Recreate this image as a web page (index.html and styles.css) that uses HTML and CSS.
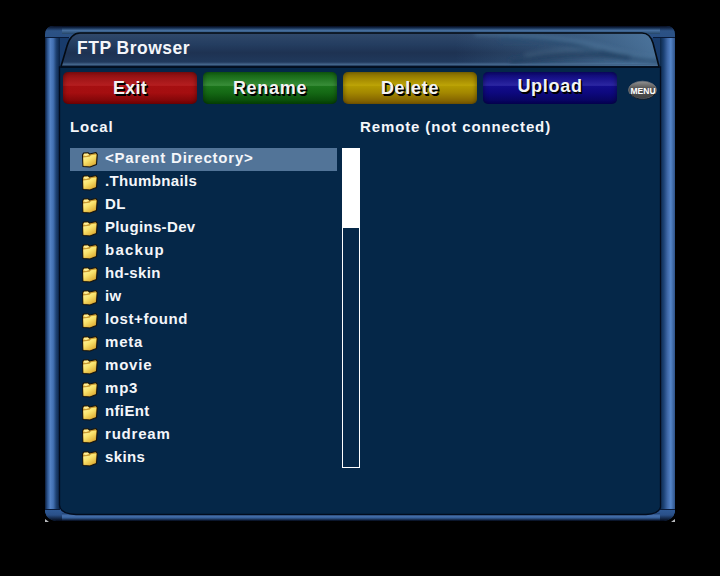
FILE: index.html
```
<!DOCTYPE html>
<html lang="en">
<head>
<meta charset="utf-8">
<title>FTP Browser</title>
<link rel="stylesheet" href="styles.css">
</head>
<body>
<svg class="frame" viewBox="0 0 720 576" aria-hidden="true">
  <defs>
    <linearGradient id="left"><stop offset="0" stop-color="#0c1d38"/><stop offset=".15" stop-color="#284f88"/><stop offset=".35" stop-color="#5482c4"/><stop offset=".55" stop-color="#4270b2"/><stop offset=".75" stop-color="#1d4070"/><stop offset="1" stop-color="#082042"/></linearGradient>
    <linearGradient id="right"><stop offset="0" stop-color="#0c2747"/><stop offset=".25" stop-color="#1c4275"/><stop offset=".5" stop-color="#4069a8"/><stop offset=".72" stop-color="#5585c8"/><stop offset="1" stop-color="#2d5288"/></linearGradient>
    <linearGradient id="top" x2="0" y2="1"><stop offset="0" stop-color="#030719"/><stop offset=".25" stop-color="#142d4f"/><stop offset=".55" stop-color="#476f9e"/><stop offset="1" stop-color="#244568"/></linearGradient>
    <linearGradient id="corner" x2="0" y2="1"><stop offset="0" stop-color="#050c20"/><stop offset=".4" stop-color="#2c5285"/><stop offset="1" stop-color="#2a5084"/></linearGradient>
    <linearGradient id="bottom" x2="0" y2="1"><stop offset="0" stop-color="#1c3f70"/><stop offset=".35" stop-color="#4871ad"/><stop offset=".6" stop-color="#36609a"/><stop offset="1" stop-color="#020817"/></linearGradient>
    <linearGradient id="foot" x2="0" y2="1"><stop offset="0" stop-color="#2f5a97"/><stop offset=".5" stop-color="#2a5088"/><stop offset="1" stop-color="#030a1a"/></linearGradient>
    <linearGradient id="title" x2="0" y2="1"><stop offset="0" stop-color="#31496b"/><stop offset=".35" stop-color="#243d60"/><stop offset=".6" stop-color="#1e3252"/><stop offset=".88" stop-color="#20395c"/><stop offset=".95" stop-color="#46658b"/><stop offset="1" stop-color="#1b3150"/></linearGradient>
    <linearGradient id="sheen"><stop offset="0" stop-color="#5482aa" stop-opacity="0"/><stop offset=".45" stop-color="#4d799f" stop-opacity=".3"/><stop offset="1" stop-color="#527da6" stop-opacity=".85"/></linearGradient>
    <filter id="soft" x="-10%" y="-50%" width="120%" height="200%"><feGaussianBlur stdDeviation="2.2"/></filter>
    <clipPath id="cap"><path d="M61 66 L67 46 Q71 33 80 33 H642 Q650 33 653 43 L659 66Z"/></clipPath>
  </defs>
  <path d="M45 35 Q45 26 54 26 H666 Q675 26 675 35 V512 Q673 520 664 521 H56 Q47 520 45 512Z" fill="#183b6b"/>
  <path d="M45 38 H60 V510 H45Z" fill="url(#left)"/>
  <path d="M660 38 H675 V510 H660Z" fill="url(#right)"/>
  <path d="M45 38 V35 Q45 26 54 26 H666 Q675 26 675 35 V38Z" fill="url(#corner)"/>
  <path d="M62 26 H660 V34 H62Z" fill="url(#top)"/>
  <path d="M45 509 H675 V512 Q673 520 664 521 H56 Q47 520 45 512Z" fill="url(#foot)"/>
  <path d="M62 513 H660 V521 H62Z" fill="url(#bottom)"/>
  <path d="M45 37.500 H69 M653 37.500 H675 M45 509.500 H60 M660 509.500 H675" stroke="#091a38"/>
  <path d="M59.500 67 H660.500 V507 Q659 514 646 514.500 H76 Q60 514 59.500 505Z" fill="#052748" stroke="#020c1d" stroke-width="1.300"/>
  <path d="M61 66 L67 46 Q71 33 80 33 H642 Q650 33 653 43 L659 66Z" fill="url(#title)"/>
  <g clip-path="url(#cap)">
    <path d="M455 33 H660 V66 H455Z" fill="url(#sheen)"/>
    <g filter="url(#soft)" fill="none">
      <path d="M500 39 Q550 38 580 47 T665 62" stroke="#294c70" stroke-width="5"/>
      <path d="M475 34 Q560 34 610 49 T665 55" stroke="#527b9f" stroke-width="3" opacity=".65"/>
      <path d="M510 62 Q580 50 630 58" stroke="#213e61" stroke-width="6" opacity=".7"/>
      <path d="M525 55 Q565 47 600 50" stroke="#587998" stroke-width="2" opacity=".5"/>
    </g>
    <path d="M61 64.500 H659" stroke="#426489"/>
  </g>
  <path d="M61 66.500 L67 46 Q71 33 80 33 H642 Q650 33 653 43 L659 66.500" fill="none" stroke="#040a12" stroke-width="1.600"/>
  <path d="M61 67 H659" stroke="#020a17" stroke-width="1.200"/>
  <path d="M45 519 L49 522 H45Z M675 519 L671 522 H675Z" fill="#b9babd"/>
</svg>
<svg class="defs" aria-hidden="true">
  <defs>
    <linearGradient id="paper" x2=".7" y2="1"><stop offset="0" stop-color="#fff6a9"/><stop offset=".5" stop-color="#f9e36c"/><stop offset="1" stop-color="#dfae35"/></linearGradient>
    <symbol id="folder" viewBox="0 0 18 18">
      <path d="M1.500 5 L2.500 3 L7 2.800 L8.500 4 L15 2.500 L16.300 4.500 L15.500 14.500 L9 17 L2 16.500Z" fill="#c99b31" stroke="#15130e" stroke-width="1.100" stroke-linejoin="round"/>
      <path d="M2.300 7.500 L8.500 6.800 L10 5.300 L15.300 4.500 L14.500 13.800 L8.500 16 L2.600 15.700Z" fill="url(#paper)"/>
      <path d="M2.300 5.500 L3.200 3.800 L7 3.600 L8.200 5 L5 6Z" fill="#ffef95"/>
    </symbol>
  </defs>
</svg>
<main class="screen">
  <h1 class="title">FTP Browser</h1>
  <nav class="actions">
    <button class="action red">Exit</button>
    <button class="action green">Rename</button>
    <button class="action yellow">Delete</button>
    <button class="action blue">Upload</button>
    <svg class="menu" viewBox="0 0 30 20">
      <defs><linearGradient id="pill" x2="0" y2="1"><stop offset="0" stop-color="#929292"/><stop offset=".4" stop-color="#555"/><stop offset="1" stop-color="#424242"/></linearGradient></defs>
      <ellipse cx="14.500" cy="10" rx="14" ry="8.800" fill="url(#pill)" stroke="#77797e" stroke-width=".7"/>
      <path d="M2 14 Q7 19.300 15 19.300 T27 14" fill="none" stroke="#161c24"/>
      <text class="menu-label" x="2.500" y="13.500">MENU</text>
    </svg>
  </nav>
  <div class="panes">
    <section class="local">
      <h2 class="heading">Local</h2>
      <div class="browser">
        <ul class="files">
          <li class="file selected"><svg class="icon"><use href="#folder"/></svg>&lt;Parent Directory&gt;</li>
          <li class="file narrow"><svg class="icon"><use href="#folder"/></svg>.Thumbnails</li>
          <li class="file narrow"><svg class="icon"><use href="#folder"/></svg>DL</li>
          <li class="file narrow"><svg class="icon"><use href="#folder"/></svg>Plugins-Dev</li>
          <li class="file wide"><svg class="icon"><use href="#folder"/></svg>backup</li>
          <li class="file narrow"><svg class="icon"><use href="#folder"/></svg>hd-skin</li>
          <li class="file narrow"><svg class="icon"><use href="#folder"/></svg>iw</li>
          <li class="file medium"><svg class="icon"><use href="#folder"/></svg>lost+found</li>
          <li class="file"><svg class="icon"><use href="#folder"/></svg>meta</li>
          <li class="file"><svg class="icon"><use href="#folder"/></svg>movie</li>
          <li class="file"><svg class="icon"><use href="#folder"/></svg>mp3</li>
          <li class="file narrow"><svg class="icon"><use href="#folder"/></svg>nfiEnt</li>
          <li class="file"><svg class="icon"><use href="#folder"/></svg>rudream</li>
          <li class="file narrow"><svg class="icon"><use href="#folder"/></svg>skins</li>
        </ul>
        <div class="scrollbar"><div class="thumb"></div></div>
      </div>
    </section>
    <section class="remote">
      <h2 class="heading">Remote (not connected)</h2>
    </section>
  </div>
</main>
</body>
</html>
```
FILE: styles.css
```
* {
  box-sizing: border-box;
}

body {
  margin: 0;
  width: 720px;
  height: 576px;
  overflow: hidden;
  background: #000;
  color: #f4f6fa;
  font-family: "Liberation Sans", Arial, sans-serif;
  font-weight: 700;
}

h1,
h2,
ul {
  margin: 0;
  padding: 0;
}

.frame {
  position: absolute;
  inset: 0;
  width: 720px;
  height: 576px;
}

.defs {
  position: absolute;
  width: 0;
  height: 0;
}

.screen {
  position: relative;
  width: 720px;
  height: 576px;
  padding: 34px 60px 0 63px;
}

.title {
  height: 38px;
  padding-left: 14px;
  font-size: 17.5px;
  line-height: 29px;
  letter-spacing: 0.5px;
}

.actions {
  display: flex;
  gap: 6px;
  height: 32px;
}

.action {
  width: 134px;
  height: 32px;
  padding: 0;
  border: 0;
  border-radius: 5px;
  color: #f3f3f3;
  font: 700 18px/32px "Liberation Sans", Arial, sans-serif;
  letter-spacing: 0.7px;
  text-align: center;
  text-shadow: 1px 1px 0 #000, 1.5px 1.5px 0 #000;
  box-shadow: inset 3px 0 4px -2px rgba(0, 0, 0, 0.35), inset -3px 0 4px -2px rgba(0, 0, 0, 0.35);
}

.red {
  letter-spacing: 0.2px;
  background: linear-gradient(#810d0f, #a01517 20%, #b51e20 42%, #a60f11 43%, #a50e10 65%, #740305);
}

.green {
  background: linear-gradient(#105a10, #207520 20%, #398e39 42%, #1c761c 43%, #146814 65%, #064206);
}

.yellow {
  background: linear-gradient(#806800, #a18700 20%, #bda407 42%, #b39b00 43%, #a38700 65%, #785700);
}

.blue {
  padding-bottom: 4px;
  line-height: 28px;
  background: linear-gradient(#0c0865, #18128b 20%, #2c27a2 42%, #130d8c 43%, #0d087e 65%, #060354);
}

.menu {
  width: 30px;
  height: 20px;
  margin: 8px 0 0 5px;
  overflow: visible;
}

.menu-label {
  fill: #fff;
  font-size: 8.5px;
}

.panes {
  display: flex;
  padding-left: 7px;
}

.local {
  width: 290px;
}

.heading {
  height: 44px;
  padding-top: 14px;
  font-size: 15px;
  line-height: 18px;
  letter-spacing: 0.88px;
}

.browser {
  display: flex;
  gap: 5px;
}

.files {
  width: 267px;
  list-style: none;
}

.file {
  display: flex;
  gap: 6px;
  height: 23px;
  padding-left: 11px;
  font-size: 15px;
  line-height: 20px;
  letter-spacing: 0.8px;
}

.narrow {
  letter-spacing: 0.35px;
}

.medium {
  letter-spacing: 0.6px;
}

.wide {
  letter-spacing: 1.25px;
}

.selected {
  background: #527498;
}

.icon {
  width: 18px;
  height: 18px;
  margin-top: 2px;
}

.scrollbar {
  width: 18px;
  height: 320px;
  border: 1px solid #fff;
}

.thumb {
  height: 79px;
  background: #fff;
}
```
